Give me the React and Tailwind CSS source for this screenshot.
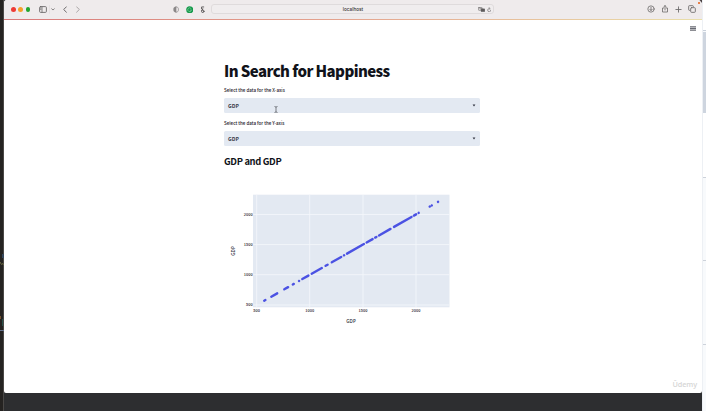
import React from "react";

const SANS = "font-['Noto_Sans_CJK_SC','Noto_Sans',sans-serif]";

// Runs of neighbouring observations, as [first, last] x positions in the chart.
const RUNS = [
  [264.2, 265.4], [271.3, 277.2], [284.3, 288.1], [292.8, 293.8], [299, 299.1],
  [302.3, 308.4], [311.7, 321.8], [325.6, 327.6], [331.8, 341.2], [344, 344.1],
  [347, 363.9], [366.6, 372.6], [375.2, 376.4], [379, 390.5], [394, 411.5],
  [413.9, 416.1], [418.6, 418.7], [429.7, 429.8], [431.7, 431.8], [438, 438.1],
];
const yOf = (x) => 305 - ((x - 256.7) * 30.2) / 53.1;

function Icon({ children, className = "", box = "0 0 24 24" }) {
  return (
    <svg viewBox={box} fill="none" stroke="currentColor" strokeLinecap="round" strokeLinejoin="round" className={`shrink-0 ${className}`}>
      {children}
    </svg>
  );
}

function Toolbar() {
  return (
    <header className="flex h-[18.5px] shrink-0 items-center bg-[#efebec] pl-[7px] pr-[6.5px] text-[#6c696a]">
      <div className="flex gap-[2.8px]">
        <i className="size-[4.6px] rounded-full bg-[#ee3b35]" />
        <i className="size-[4.6px] rounded-full bg-[#f5a02b]" />
        <i className="size-[4.6px] rounded-full bg-[#21a62f]" />
      </div>
      <Icon box="0 0 8 7" className="ml-[8.9px] h-[7px] w-2">
        <rect x=".6" y=".6" width="6.8" height="5.8" rx="1" strokeWidth=".9" />
        <path d="M3 .8v5.4M1.5 2h.5M1.5 3.3h.5" strokeWidth=".8" />
      </Icon>
      <div className="ml-[2px] h-[9px] w-px bg-[#e6e2e3]" />
      <Icon box="0 0 4 3" className="ml-[1px] h-[3px] w-1">
        <path d="M.7 .8L2 2L3.3 .8" strokeWidth=".8" />
      </Icon>
      <Icon box="0 0 4 7" className="ml-[8px] h-[7px] w-1">
        <path d="M3.4 .8L.7 3.5L3.4 6.2" strokeWidth="1" />
      </Icon>
      <Icon box="0 0 4 7" className="ml-[9px] h-[7px] w-1 text-[#a09d9e]">
        <path d="M.6 .8L3.3 3.5L.6 6.2" strokeWidth=".9" />
      </Icon>
      <Icon box="0 0 6 7" className="ml-[93px] h-[7px] w-1.5 text-[#8b8889]">
        <path d="M3 .8C1.500 .8 .6 1.600 .6 3v1c0 1.400 .9 2.200 2.400 2.300z" fill="currentColor" strokeWidth=".4" />
        <path d="M3 .8c1.500 0 2.400 .8 2.400 2.200v1c0 1.400-.9 2.200-2.400 2.300" strokeWidth=".7" />
      </Icon>
      <Icon box="0 0 8 8" className="ml-[6.5px] size-[7.5px]">
        <circle cx="4" cy="4" r="3.8" fill="#159a4c" stroke="none" />
        <path d="M5.500 2.800A2 2 0 1 0 5.800 4.400H4.600" stroke="#8fd3a9" strokeWidth=".7" />
      </Icon>
      <Icon box="0 0 5 8" className="ml-[6.5px] h-[7.5px] w-[5px] text-[#4f4c4d]">
        <path d="M3.800 1H1.500v2.200h1.700L1.500 4.800" strokeWidth=".9" />
        <circle cx="2.800" cy="5.700" r="1.300" strokeWidth=".9" />
      </Icon>
      <div className="ml-[6px] flex h-[10px] w-[283.5px] items-center justify-center rounded-[3px] border border-[#dfdbdc] bg-[#f0edee] pr-[2px]">
        <div className="ml-[16.5px] flex-1 text-center font-['Inter',sans-serif] text-[4.7px] leading-none font-medium text-[#353233]">localhost</div>
        <Icon box="0 0 8 6" className="h-[5.5px] w-[7.5px] text-[#5e5b5c]">
          <rect x=".4" y=".4" width="4" height="3.2" rx=".6" strokeWidth=".6" />
          <path d="M1.4 1.4h2M2.4 1v1.6" strokeWidth=".4" />
          <rect x="3.2" y="1.8" width="4.2" height="3.4" rx=".7" fill="currentColor" strokeWidth=".3" />
        </Icon>
        <Icon box="0 0 5 6" className="ml-[1.5px] h-[5.5px] w-[4.5px]">
          <path d="M2.5 1.6A1.8 1.8 0 1 0 4.3 3.4M2.4 .5l1 1.1l-1 .9" strokeWidth=".7" />
        </Icon>
      </div>
      <div className="ml-auto flex items-center gap-[5.8px]">
        <Icon className="size-[8px]">
          <circle cx="12" cy="12" r="9.5" strokeWidth="2.4" />
          <path d="M12 7v9M8.500 13l3.500 3.500L15.500 13" strokeWidth="2.5" />
        </Icon>
        <Icon className="size-[8px]">
          <path d="M8 9H4.500v12h15V9H16M12 15V2M8.500 5L12 1.800L15.500 5" strokeWidth="2.4" />
        </Icon>
        <Icon className="size-[7px]">
          <path d="M12 3v18M3 12h18" strokeWidth="3" />
        </Icon>
        <Icon className="size-[8px]">
          <rect x="8" y="8" width="14" height="14" rx="2.500" strokeWidth="2.6" />
          <path d="M5 16H4a2 2 0 0 1-2-2V4a2 2 0 0 1 2-2h10a2 2 0 0 1 2 2v1" strokeWidth="2.6" />
        </Icon>
      </div>
    </header>
  );
}

function Select({ label, className = "", children }) {
  return (
    <div className={className}>
      <div className="h-[7px] text-[4.5px] leading-[7px] font-medium whitespace-nowrap text-[#1f212b]">{label}</div>
      <div className="relative mt-[3.5px] flex h-[15.5px] items-center justify-between rounded-[1.5px] bg-[#e3e9f2] pr-[4.5px] pl-1">
        <span className="pt-[1px] text-[5.2px] leading-[8px] font-bold text-[#3c3e4a]">GDP</span>
        <svg viewBox="0 0 4 3" className="h-[3px] w-1"><path d="M.6 .6h2.800L2 2.500z" fill="#31333f" /></svg>
        {children}
      </div>
    </div>
  );
}

function Chart() {
  return (
    <svg viewBox="224 190 256 138" className="mt-[22px] block h-[138px] w-[256px]">
      <rect x="253" y="194.700" width="196.500" height="112.600" fill="#e3e9f2" />
      <g stroke="#f3f6fa" strokeWidth=".9">
        {[256.7, 309.7, 363, 416].map((x) => <path key={x} d={`M${x} 194.700V307.300`} />)}
        {[214.4, 244.6, 274.7, 305].map((y) => <path key={y} d={`M253 ${y}H449.500`} />)}
      </g>
      <g stroke="#4b52e3" strokeWidth="2.4" strokeLinecap="round">
        {RUNS.map(([a, b]) => <path key={a} d={`M${a} ${yOf(a)}L${b} ${yOf(b)}`} />)}
      </g>
      <g className={`${SANS} text-[3.9px] font-medium`} fill="#1f212b">
        {[[256.7, 500], [309.7, 1000], [363, 1500], [416, 2000]].map(([x, t]) => (
          <text key={t} x={x} y="312.200" textAnchor="middle">{t}</text>
        ))}
        {[[305, 500], [274.7, 1000], [244.6, 1500], [214.4, 2000]].map(([y, t]) => (
          <text key={t} x="252.700" y={y + 1.4} textAnchor="end">{t}</text>
        ))}
      </g>
      <g className="font-['Open_Sans',sans-serif] text-[4.5px] font-semibold" fill="#31333f" textAnchor="middle">
        <text x="351" y="322.700">GDP</text>
        <text transform="translate(235.200 251) rotate(-90)">GDP</text>
      </g>
    </svg>
  );
}

export default function App() {
  return (
    <div className="flex h-[411px] w-[706px] overflow-hidden bg-[#2d2e30]">
      <aside className="flex w-1 shrink-0 flex-col border-r border-[#4a4846] bg-[#252321]">
        <div className="mt-[254px] ml-[2px] h-[4px] w-[2px] bg-[#34465b]" />
        <svg viewBox="0 0 4 5" className="mt-[3px] h-[5px] w-1"><path d="M0 1L1.500 3.500L3 2.500L4 4" stroke="#6c6945" fill="none" /></svg>
        <div className="mt-[50px] h-[3px] w-px bg-[#755431]" />
        <div className="ml-[2px] h-[7px] w-px bg-[#285049]" />
        <div className="mt-[4px] h-px w-1 bg-[#65728c]" />
      </aside>
      <div className="relative flex w-[698px] shrink-0 flex-col">
        <svg viewBox="0 0 5 4" className="absolute top-0 right-0 h-1 w-[5px]">
          <rect x="1" y="2" width="2" height="2" fill="#e8804a" />
          <path d="M2.500 0H5V3z" fill="#4a4344" />
        </svg>
        <main className={`flex h-[393px] shrink-0 flex-col overflow-hidden rounded-tl-[3px] rounded-b-[2px] bg-white text-[#11131a] ${SANS}`}>
          <Toolbar />
          <div className="h-[1.5px] shrink-0 bg-linear-to-r from-[#d9797a] via-[#e4a58f] to-[#e9dfaa]" />
          <div className="flex h-[16px] shrink-0 items-center justify-end pr-[6px]">
            <svg viewBox="0 0 6 5" className="h-[5px] w-1.5"><path d="M0 .8h6M0 2.500h6M0 4.200h6" stroke="#686a72" strokeWidth="1.200" /></svg>
          </div>
          <section className="ml-[220px] w-[256px] pt-[24px]">
            <h1 className="h-[22px] text-[15px] leading-[22px] font-black tracking-[-0.59px] whitespace-nowrap">In Search for Happiness</h1>
            <Select label="Select the data for the X-axis" className="mt-[5px]">
              <svg viewBox="0 0 4 7" className="absolute top-[8px] left-[50px] h-[7px] w-1"><path d="M.5 .5L2 1L3.500 .5M2 1V6M.5 6.500L2 6L3.500 6.500" fill="none" stroke="#4b4d55" strokeWidth=".7" /></svg>
            </Select>
            <Select label="Select the data for the Y-axis" className="mt-[7px]" />
            <h2 className="mt-[9px] h-[13px] text-[9.4px] leading-[13px] font-bold tracking-[-0.35px]">GDP and GDP</h2>
            <Chart />
          </section>
          <div className="mt-auto mb-[4px] flex justify-end pr-[5px] font-['Open_Sans',sans-serif] text-[7.3px] leading-[9px] font-semibold tracking-[-0.1px] text-[#d6d6d6]">
            <span>Ûdemy</span>
          </div>
        </main>
        <footer className="h-[18px] bg-[#2d2e30]" />
      </div>
      <aside className="flex w-1 shrink-0 flex-col border-l border-[#edf0f4] bg-[#f8fafc]">
        <div className="h-[30px] bg-white" />
        <div className="h-px bg-[#c9d0da]" />
        <div className="mt-px h-[81px] bg-[#ced5df]" />
        <div className="h-[64px] bg-white" />
        <div className="h-px bg-[#cdd2da]" />
        <div className="mt-[82px] h-px bg-[#cdd2da]" />
        <div className="mt-[83px] h-px bg-[#cdd2da]" />
      </aside>
    </div>
  );
}
